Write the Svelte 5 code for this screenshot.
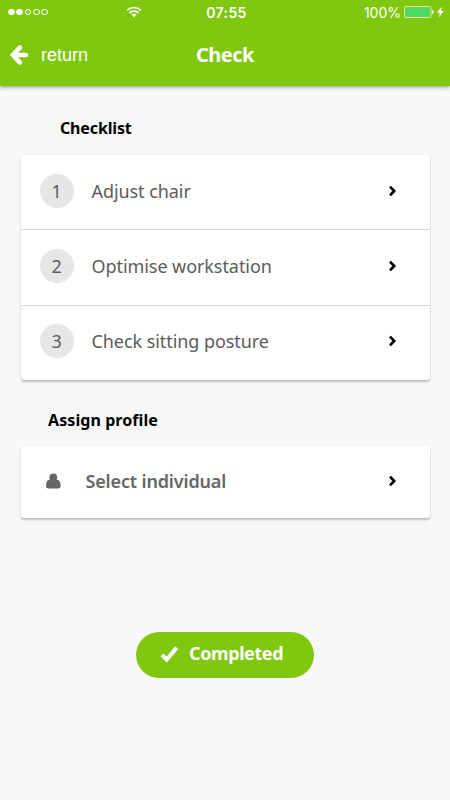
<script lang="ts">
    const steps = ['Adjust chair', 'Optimise workstation', 'Check sitting posture'];
    const signal = [true, true, false, false, false];
</script>

{#snippet chevron()}
    <svg class="chevron" width="8" height="12" viewBox="0 0 8 12">
        <path d="M1 1.6 L5.2 6 L1 10.4" fill="none" stroke="#000" stroke-width="2.6" />
    </svg>
{/snippet}

<div class="screen">
    <header class="header">
        <div class="status-bar">
            <div class="status-left">
                <div class="signal">
                    {#each signal as on}
                        <span class="dot" class:on></span>
                    {/each}
                </div>
                <svg class="wifi" width="16" height="12" viewBox="0 0 16 12">
                    <g fill="none" stroke="#fff" stroke-width="1.7">
                        <path d="M1.2 4.3 A9.6 9.6 0 0 1 14.8 4.3" />
                        <path d="M3.6 6.8 A6.3 6.3 0 0 1 12.4 6.8" />
                    </g>
                    <path d="M5.4 8.6 A3.9 3.9 0 0 1 10.6 8.6 L8 11.3 Z" fill="#fff" />
                </svg>
            </div>
            <span class="time">07:55</span>
            <div class="status-right">
                <span class="percent">100%</span>
                <svg width="30" height="12" viewBox="0 0 30 12">
                    <rect x="0.5" y="0.5" width="26.5" height="11" rx="1.5" fill="none" stroke="#d4f0b0" />
                    <rect x="1.5" y="1.5" width="24.5" height="9" fill="#4cd964" />
                    <path d="M28 3.7 Q29.8 4.4 29.8 6 Q29.8 7.6 28 8.3 Z" fill="#fff" />
                </svg>
                <svg class="bolt" width="7" height="12" viewBox="0 0 7 12">
                    <path d="M4.7 0.5 L0 6.7 H2.8 L1.8 11.5 L6.8 5.1 H3.9 Z" fill="#fff" />
                </svg>
            </div>
        </div>
        <nav class="nav-bar">
            <button class="back">
                <svg width="18" height="20" viewBox="0 0 18 20">
                    <path
                        d="M9.8 2.7 L2.9 10 L9.8 17.3 M3.5 10 H15.8"
                        fill="none"
                        stroke="#fff"
                        stroke-width="4.6"
                        stroke-linecap="round"
                        stroke-linejoin="miter"
                    />
                </svg>
                <span>return</span>
            </button>
            <h1 class="title">Check</h1>
        </nav>
    </header>

    <main class="content">
        <h2 class="section-title checklist-title">Checklist</h2>
        <div class="card">
            {#each steps as step, i}
                <button class="row">
                    <span class="number">{i + 1}</span>
                    <span class="label">{step}</span>
                    {@render chevron()}
                </button>
            {/each}
        </div>

        <h2 class="section-title profile-title">Assign profile</h2>
        <div class="card">
            <button class="row profile">
                <svg class="person" width="15" height="16" viewBox="0 0 15 16">
                    <circle cx="7.3" cy="4.3" r="3.9" fill="#666" />
                    <path
                        d="M3.6 6.6 Q7.3 10 11 6.6 C13.6 7 14.6 9.6 14.6 12.8 Q14.6 15.5 12 15.5 H2.7 Q0 15.5 0 12.8 C0 9.6 1 7 3.6 6.6 Z"
                        fill="#666"
                    />
                </svg>
                <span class="label">Select individual</span>
                {@render chevron()}
            </button>
        </div>

        <button class="completed">
            <svg width="19" height="17" viewBox="0 0 19 17">
                <path d="M1.9 8.9 L6.7 13.5 L16.7 1.6" fill="none" stroke="#fff" stroke-width="4" />
            </svg>
            <span class="completed-text">Completed</span>
        </button>
    </main>
</div>

<style>
    :global(body) {
        margin: 0;
    }

    .screen {
        height: 800px;
        background: #f8f8f8;
        font-family: 'Noto Sans', sans-serif;
        overflow: hidden;
    }

    button {
        border: none;
        background: none;
        padding: 0;
        font: inherit;
        color: inherit;
        cursor: pointer;
        text-align: left;
    }

    svg {
        display: block;
        flex-shrink: 0;
    }

    .header {
        height: 86px;
        background: #80c80f;
        color: #fff;
        box-shadow: 0 1px 4px rgba(0, 0, 0, 0.45);
    }

    .status-bar {
        display: grid;
        grid-template-columns: 1fr auto 1fr;
        align-items: center;
        height: 24px;
        padding: 0 6px 0 8px;
        font-family: Inter, sans-serif;
        font-size: 14px;
    }

    .status-left,
    .status-right,
    .signal {
        display: flex;
        align-items: center;
    }

    .status-right {
        justify-content: flex-end;
    }

    .signal {
        gap: 1.4px;
    }

    .dot {
        box-sizing: border-box;
        width: 6.9px;
        height: 6.9px;
        border: 0.8px solid #fff;
        border-radius: 50%;
    }

    .dot.on {
        background: #fff;
    }

    .wifi {
        margin-left: 78px;
    }

    .time {
        padding-left: 1px;
        font-weight: 600;
        letter-spacing: 0.4px;
    }

    .percent {
        margin-right: 3px;
    }

    .bolt {
        margin-left: 3px;
    }

    .nav-bar {
        display: grid;
        grid-template-columns: 1fr auto 1fr;
        align-items: center;
        height: 62px;
    }

    .back {
        display: flex;
        align-items: center;
        gap: 13px;
        padding-left: 10px;
        font-family: 'Liberation Sans', Arial, sans-serif;
        font-size: 18px;
    }

    .title {
        margin: 0;
        font-size: 20px;
        line-height: 26px;
        font-weight: 700;
        letter-spacing: -0.5px;
    }

    .content {
        display: flex;
        flex-direction: column;
        padding: 30px 20.5px 0;
    }

    .section-title {
        margin: 0;
        font-size: 16px;
        line-height: 24px;
        font-weight: 700;
        color: #000;
    }

    .checklist-title {
        padding: 0 0 15px 39.5px;
        letter-spacing: -0.15px;
    }

    .profile-title {
        padding: 28px 0 14px 27.5px;
        letter-spacing: 0.08px;
    }

    .card {
        background: #fff;
        border-radius: 3px;
        box-shadow: 0 2px 2px rgba(0, 0, 0, 0.22), 0 0 2px rgba(0, 0, 0, 0.06);
    }

    .row {
        display: flex;
        align-items: center;
        box-sizing: border-box;
        width: 100%;
        height: 74px;
        padding: 0 33px 3px 19px;
        font-size: 18px;
        letter-spacing: -0.07px;
        color: #5b5b5b;
    }

    .row + .row {
        height: 75.5px;
        border-top: 1px solid #d8d8d8;
    }

    .number {
        width: 34px;
        margin-right: 18px;
        border-radius: 50%;
        background: #e6e6e6;
        line-height: 34px;
        text-align: center;
    }

    .label {
        flex: 1;
    }

    .profile {
        height: 72px;
        padding: 0 33px 2px 25px;
        font-weight: 600;
        letter-spacing: -0.16px;
        color: #666;
    }

    .person {
        margin-right: 25px;
    }

    .completed {
        display: flex;
        align-items: center;
        align-self: center;
        gap: 10px;
        box-sizing: border-box;
        width: 178px;
        height: 46px;
        margin-top: 114px;
        padding: 0 0 2px 24px;
        border-radius: 23px;
        background: #80c80f;
        color: #fff;
        font-size: 18px;
        font-weight: 700;
        letter-spacing: -0.4px;
    }

    .completed-text {
        padding-bottom: 3px;
    }
</style>
